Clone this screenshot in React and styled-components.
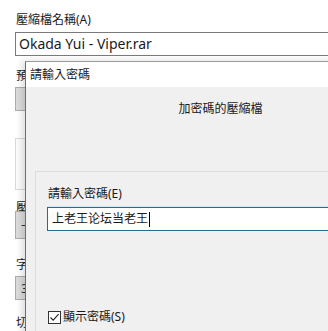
import React from "react";
import styled, { createGlobalStyle } from "styled-components";

const Global = createGlobalStyle`
  html, body { margin: 0; padding: 0; background: #ffffff; }
  body { width: 328px; height: 331px; overflow: hidden; position: relative;
    font-family: "Noto Sans", "Noto Sans CJK TC", sans-serif; color: #1a1a1a; }
`;

const Page = styled.div`
  position: relative;
  width: 328px;
  height: 331px;
  overflow: hidden;
  background: #ffffff;
  padding: 12px 0 0 15px;
  box-sizing: border-box;
  display: flex;
  flex-direction: column;
`;

const Label = styled.div`
  font-size: 12px;
  line-height: 16px;
  padding-left: 1px;
  margin-top: ${(p) => p.$mt || 0}px;
  white-space: nowrap;
`;

const TextField = styled.div`
  margin-top: ${(p) => p.$mt || 0}px;
  height: 24px;
  box-sizing: border-box;
  border: 1px solid #7a7a7a;
  border-right: none;
  background: #fff;
  font-size: 14px;
  line-height: 22px;
  padding-left: 3px;
  white-space: nowrap;
`;

const Combo = styled.div`
  margin-top: ${(p) => p.$mt || 0}px;
  height: ${(p) => p.$h}px;
  box-sizing: border-box;
  border: 1px solid #adadad;
  background: #dcdcdc;
  font-size: 13px;
  line-height: ${(p) => p.$h - 2}px;
  padding-left: 5px;
  color: #333;
`;

const GroupBox = styled.div`
  margin-top: ${(p) => p.$mt || 0}px;
  height: ${(p) => p.$h}px;
  box-sizing: border-box;
  border: 1px solid #dadada;
  background: #fcfcfc;
`;

const Dialog = styled.div`
  position: absolute;
  left: 25px;
  top: 61px;
  width: 390px;
  height: 320px;
  box-sizing: border-box;
  border-top: 1px solid #9a9a9a;
  border-left: 1px solid #6e6e6e;
  background: #f0f0f0;
  box-shadow: -3px 0 7px rgba(0, 0, 0, 0.14);
  display: flex;
  flex-direction: column;
`;

const TitleBar = styled.div`
  height: 25px;
  background: #ffffff;
  display: flex;
  align-items: center;
  padding-left: 4px;
  font-size: 12px;
  line-height: 16px;
`;

const Header = styled.div`
  height: 84px;
  box-sizing: border-box;
  padding-top: 14px;
  text-align: center;
  font-size: 12px;
  line-height: 16px;
`;

const Panel = styled.div`
  margin-left: 9px;
  flex: 1;
  border-top: 1px solid #dcdcdc;
  border-left: 1px solid #dcdcdc;
  padding: 14px 0 0 11px;
  display: flex;
  flex-direction: column;
`;

const PwdLabel = styled.div`
  font-size: 12px;
  line-height: 16px;
  padding-left: 1px;
`;

const PwdField = styled.div`
  margin-top: 5px;
  height: 24px;
  box-sizing: border-box;
  border: 1px solid #2e6a8a;
  border-right: none;
  box-shadow: 0 -1px 0 #cde6f5;
  background: #ffffff;
  display: flex;
  align-items: center;
  padding-left: 4px;
  font-size: 12px;
  line-height: 16px;
`;

const Caret = styled.span`
  display: inline-block;
  width: 1px;
  height: 15px;
  background: #000;
  margin-left: 1px;
`;

const CheckRow = styled.label`
  margin-top: 78px;
  display: flex;
  align-items: center;
  gap: 2px;
  font-size: 12px;
  line-height: 16px;
  padding-left: 1px;
`;

const Box = styled.span`
  width: 13px;
  height: 13px;
  box-sizing: border-box;
  border: 1px solid #333;
  background: #fff;
  display: flex;
  align-items: center;
  justify-content: center;
`;

export default function App() {
  return (
    <>
      <Global />
      <Page>
        <Label>壓縮檔名稱(A)</Label>
        <TextField $mt={4}>Okada Yui - Viper.rar</TextField>
        <Label $mt={12}>預</Label>
        <Combo $mt={3} $h={26} />
        <GroupBox $mt={27} $h={58} />
        <Label $mt={10}>壓</Label>
        <Combo $mt={-5} $h={28}>一</Combo>
        <Label $mt={18}>字</Label>
        <Combo $mt={3} $h={24}>3</Combo>
        <Label $mt={15}>切</Label>
        <Dialog>
          <TitleBar>請輸入密碼</TitleBar>
          <Header>加密碼的壓縮檔</Header>
          <Panel>
            <PwdLabel>請輸入密碼(E)</PwdLabel>
            <PwdField>
              上老王论坛当老王
              <Caret />
            </PwdField>
            <CheckRow>
              <Box>
                <svg width="11" height="11" viewBox="0 0 11 11">
                  <path d="M1.5 5.5 L4.2 8.2 L9.6 2.2" fill="none" stroke="#222" strokeWidth="1.1" />
                </svg>
              </Box>
              顯示密碼(S)
            </CheckRow>
          </Panel>
        </Dialog>
      </Page>
    </>
  );
}
